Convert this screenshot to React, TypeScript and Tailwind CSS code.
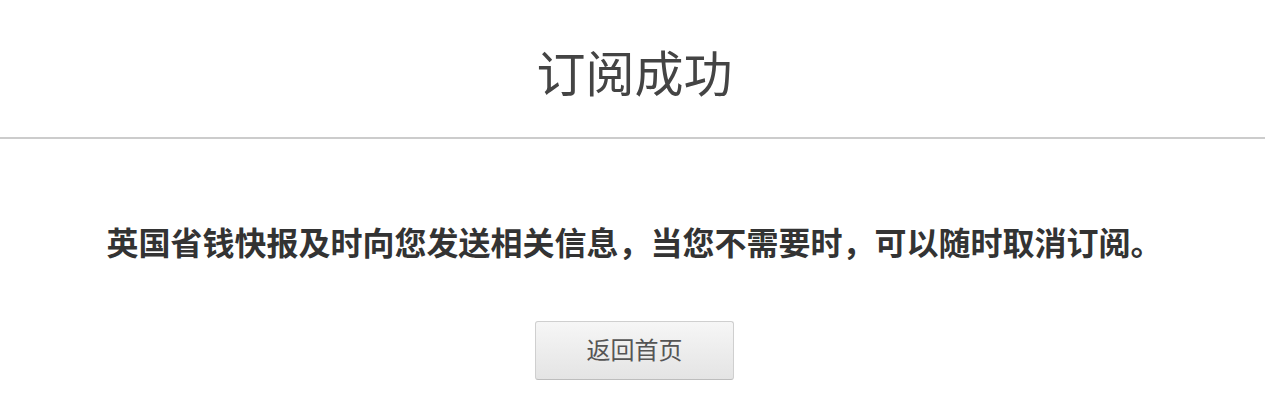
export default function App() {
  return (
    <div
      className="w-full bg-white pl-[4px]"
      style={{ fontFamily: '"Liberation Sans", "Noto Sans CJK SC", sans-serif' }}
    >
      <header className="h-[139px] border-b-2 border-[#cccccc] -ml-[4px] pl-[4px] flex justify-center pt-[51px]">
        <h1 className="text-[49px] leading-[49px] text-[#444444] font-normal">订阅成功</h1>
      </header>
      <main className="flex flex-col items-center pt-[89px]">
        <p className="text-[32px] leading-[32px] font-bold text-[#333333]">
          英国省钱快报及时向您发送相关信息，当您不需要时，可以随时取消订阅。
        </p>
        <button className="mt-[61px] w-[199px] h-[59px] rounded-[3px] border border-[#cfcfcf] border-b-[#bdbdbd] bg-gradient-to-b from-[#f6f6f6] to-[#e4e4e4] text-[24px] text-[#555555] flex items-center justify-center">
          返回首页
        </button>
      </main>
    </div>
  );
}
